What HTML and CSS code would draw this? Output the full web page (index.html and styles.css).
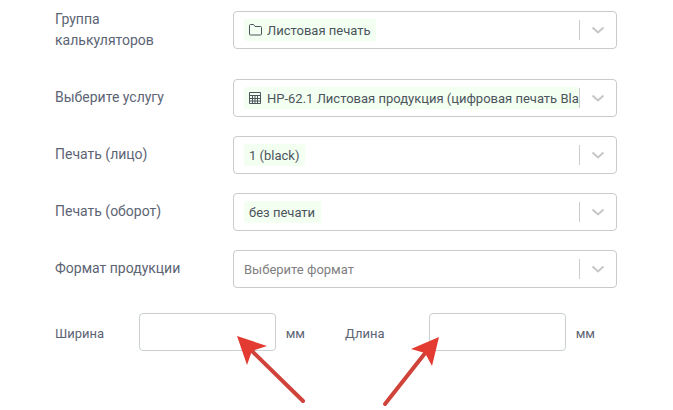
FILE: index.html
```html
<!doctype html>
<html lang="ru">
  <head>
    <meta charset="utf-8">
    <title>Калькулятор</title>
    <link rel="stylesheet" href="styles.css">
  </head>
  <body>
    <form class="calc">
      <div class="row row-first">
        <label class="name" for="group">Группа калькуляторов</label>
        <div class="control">
          <div class="value">
            <div class="chip">
              <svg class="icon" viewBox="0 0 14 14"><path d="M.5 11V2.5q0-1 1-1h3l1.5 2h5.500q1 0 1 1V11q0 1-1 1h-10q-1 0-1-1z"/></svg>
              <select id="group"><option>Листовая печать</option></select>
            </div>
          </div>
          <svg class="arrow" viewBox="0 0 20 20"><path d="M4.500 7.500l5.500 5 5.500-5"/></svg>
        </div>
      </div>
      <div class="row">
        <label class="name" for="service">Выберите услугу</label>
        <div class="control">
          <div class="value">
            <div class="chip">
              <svg class="icon" viewBox="0 0 14 14"><path d="M.5 1.500h11v11H.5zM.5 4.500h11M.5 7.500h11M.5 10h11M3.500 4.500v8M6 4.500v8M8.500 4.500v8"/></svg>
              <select id="service"><option>HP-62.1 Листовая продукция (цифровая печать Black)</option></select>
            </div>
          </div>
          <svg class="arrow" viewBox="0 0 20 20"><path d="M4.500 7.500l5.500 5 5.500-5"/></svg>
        </div>
      </div>
      <div class="row">
        <label class="name" for="face">Печать (лицо)</label>
        <div class="control">
          <div class="value">
            <div class="chip"><select id="face"><option>1 (black)</option></select></div>
          </div>
          <svg class="arrow" viewBox="0 0 20 20"><path d="M4.500 7.500l5.500 5 5.500-5"/></svg>
        </div>
      </div>
      <div class="row">
        <label class="name" for="back">Печать (оборот)</label>
        <div class="control">
          <div class="value">
            <div class="chip"><select id="back"><option>без печати</option></select></div>
          </div>
          <svg class="arrow" viewBox="0 0 20 20"><path d="M4.500 7.500l5.500 5 5.500-5"/></svg>
        </div>
      </div>
      <div class="row">
        <label class="name" for="format">Формат продукции</label>
        <div class="control">
          <div class="value">
            <select id="format" class="empty"><option>Выберите формат</option></select>
          </div>
          <svg class="arrow" viewBox="0 0 20 20"><path d="M4.500 7.500l5.500 5 5.500-5"/></svg>
        </div>
      </div>
      <div class="sizes">
        <div class="size">
          <label for="width">Ширина</label>
          <div class="box">
            <input type="text" id="width">
            <svg class="pointer pointer-left" viewBox="0 0 70 72"><path class="line" d="M14 14L66 65"/><path class="head" d="M0 0l30 10-15 5-5 14z"/></svg>
          </div>
          <span class="unit">мм</span>
        </div>
        <div class="size">
          <label for="length">Длина</label>
          <div class="box">
            <input type="text" id="length">
            <svg class="pointer pointer-right" viewBox="0 0 70 72"><path class="line" d="M45 16L4 68"/><path class="head" d="M58 1L30 13l14 4 7 13z"/></svg>
          </div>
          <span class="unit">мм</span>
        </div>
      </div>
    </form>
  </body>
</html>
```
FILE: styles.css
```css
*{box-sizing:border-box;}
body{
  margin:0;
  background:#fff;
  color:#5c6474;
  font:13px/20px Roboto,"Noto Sans",sans-serif;
}
.calc{padding:9px 56px 59px 55px;}

.row{
  display:grid;
  grid-template-columns:178px 1fr;
  align-items:center;
  margin-bottom:19px;
}
.row-first{margin-bottom:28px;}
.name{
  padding-bottom:2px;
  font-size:14px;
  line-height:21px;
}
.row-first .name{padding:0 60px 0 0;}

.control{
  display:flex;
  align-items:center;
  min-width:0;
  height:38px;
  border:1px solid #c9cacd;
  border-radius:4px;
}
.value{
  flex:1;
  min-width:0;
  overflow:hidden;
  padding-left:10px;
}
.chip{
  display:flex;
  align-items:center;
  gap:4px;
  width:max-content;
  padding:0 5px;
  border-radius:2px;
  background:#f3fff1;
}
select{
  display:block;
  appearance:none;
  height:22px;
  padding:2px 0 0;
  border:0;
  background:none;
  color:#4c545d;
  font:inherit;
}
.empty{color:#808080;}
.icon{
  width:14px; height:14px;
  fill:none; stroke:#4c545d;
}
.arrow{
  width:37px; height:20px;
  border-left:1px solid #cccccc;
  fill:none; stroke:#c6c6c8; stroke-width:2;
}

.sizes{
  display:grid;
  grid-template-columns:1fr 1fr;
  gap:40px;
  margin-top:25px;
  padding-right:22px;
}
.size{display:flex; align-items:center;}
.size label{width:84px;}
.size label, .unit{padding-top:3px;}
.box{
  flex:1;
  position:relative;
  min-width:0;
}
.box input{
  display:block;
  width:100%; height:38px;
  padding:0 10px;
  border:1px solid #c9ced0;
  border-radius:4px;
  background:none;
  font:inherit;
}
.unit{margin-left:10px;}

/* red pointers over the size fields */
.pointer{
  position:absolute; top:23px;
  width:70px; height:72px;
  pointer-events:none;
}
.pointer-left{right:-31px;}
.pointer-right{left:-48px;}
.line{stroke:#d0433a; stroke-width:4; stroke-linecap:round;}
.head{fill:#e33b31;}
```
